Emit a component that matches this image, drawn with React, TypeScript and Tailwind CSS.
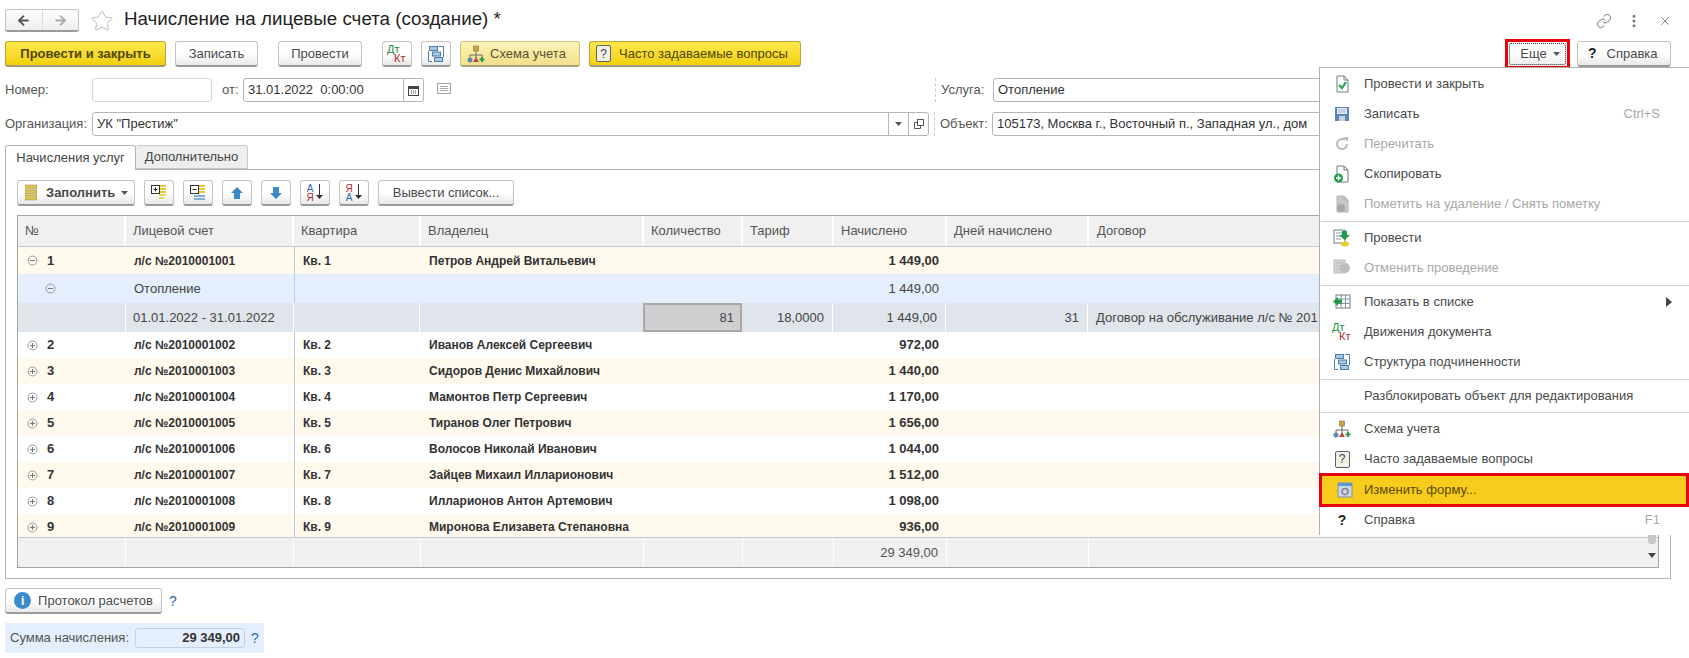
import type { ReactNode } from "react";
import { ArrowLeft, ArrowRight, Star, Link, EllipsisVertical, X } from "lucide-react";

const btn = "h-[26px] flex items-center justify-center shrink-0 rounded-[3px] border border-[#c4c4c4] border-b-[#9a9a9a] border-b-2 bg-gradient-to-b from-white via-white to-[#e9e9e9] text-[#4a4a4a]";
const yellowBtn = "h-[26px] flex items-center justify-center shrink-0 rounded-[3px] border border-[#b9a93a] border-b-[#a09a70] border-b-2 bg-gradient-to-b from-[#ffe94a] to-[#f2d000] text-[#4f4700]";
const input = "h-6 rounded-[3px] border border-[#b5b5b5] bg-white flex items-center px-1 text-[13px] text-[#333]";

const DtKt = () => (
  <svg width="22" height="22" viewBox="0 0 22 22" className="shrink-0">
    <text x="1" y="10" fontSize="11" fontFamily="Liberation Sans" fill="#1d8a3c">Дт</text>
    <text x="8" y="19" fontSize="11" fontFamily="Liberation Sans" fill="#b02a30">Кт</text>
  </svg>
);

const Structure = () => (
  <svg width="18" height="18" viewBox="0 0 18 18" fill="none" className="shrink-0">
    <path d="M1.5 6V16.5H5M12 1.5H16.5V12" stroke="#4f7ea8" />
    <rect x="2.5" y="1.5" width="8" height="4" fill="#a9c8e4" stroke="#4f7ea8" />
    <rect x="5.5" y="7" width="8" height="4" fill="#a9c8e4" stroke="#4f7ea8" />
    <rect x="7.5" y="12.5" width="8" height="4" fill="#a9c8e4" stroke="#4f7ea8" />
  </svg>
);

const Scheme = () => (
  <svg width="18" height="18" viewBox="0 0 18 18" fill="none" className="shrink-0">
    <rect x="6.5" y="1" width="5" height="5" fill="#c9a24a" stroke="#8f7430" strokeWidth=".6" />
    <path d="M9 6V10M3 13V10H15V13M9 10V13" stroke="#6a6a6a" />
    <circle cx="3" cy="15" r="2.5" fill="#5d86b0" />
    <path d="M9 12L12 17H6Z" fill="#b8483e" />
    <path d="M15 12V17M12.5 14.5H17.5" stroke="#2f9a52" strokeWidth="2" />
  </svg>
);

const Help = () => (
  <span className="w-[15px] h-[17px] shrink-0 flex items-center justify-center rounded-[2px] border border-[#5a6070] bg-[#f4f1e0] text-[12px] leading-none text-[#2f3f78]">?</span>
);

const Mark = ({ plus }: { plus: boolean }) => (
  <svg width="11" height="11" viewBox="0 0 11 11" fill="none" className="shrink-0">
    <circle cx="5.5" cy="5.5" r="4.5" stroke="#9a9a9a" />
    <path d={plus ? "M3 5.5H8M5.5 3V8" : "M3 5.5H8"} stroke="#777" />
  </svg>
);

const Doc = ({ children, muted }: { children?: ReactNode; muted?: boolean }) => (
  <svg width="18" height="20" viewBox="0 0 18 20" fill="none" className="shrink-0">
    <path d="M4 2H11L15 6V18H4Z" fill={muted ? "#c8c8c8" : "#fff"} stroke={muted ? "#b5b5b5" : "#6e7a88"} />
    <path d="M11 2V6H15" stroke={muted ? "#b5b5b5" : "#6e7a88"} />
    {children}
  </svg>
);

const FillLines = ({ plus }: { plus: boolean }) => (
  <svg width="18" height="18" viewBox="0 0 18 18" fill="none">
    <path d="M9 2H16M9 5H16M9 8H16" stroke="#ecc92a" strokeWidth="2" />
    <path d={plus ? "M9 11H16M9 14H14" : "M5 12H16M5 15H16"} stroke={plus ? "#ecc92a" : "#5b9ad0"} strokeWidth="1.6" />
    <rect x="1.5" y="1.5" width="8" height="8" fill="#fff" stroke="#333" />
    <path d={plus ? "M3.5 5.5H7.5M5.5 3.5V7.5" : "M3.5 5.5H7.5"} stroke="#222" />
  </svg>
);

const Arrow = ({ down }: { down?: boolean }) => (
  <svg width="14" height="14" viewBox="0 0 14 14">
    <path d={down ? "M4 1H10V7H13L7 13L1 7H4Z" : "M7 1L13 7H10V13H4V7H1Z"} fill="#3a8ac8" />
  </svg>
);

const Sort = ({ top, bottom, topColor, bottomColor }: { top: string; bottom: string; topColor: string; bottomColor: string }) => (
  <div className="flex items-center gap-[1px]">
    <div className="flex flex-col text-[10px] leading-[9px]">
      <span style={{ color: topColor }}>{top}</span>
      <span style={{ color: bottomColor }}>{bottom}</span>
    </div>
    <svg width="9" height="17" viewBox="0 0 9 17"><path d="M4.5 0V12" stroke="#333" /><path d="M1 11H8L4.5 15Z" fill="#333" /></svg>
  </div>
);

const Caret = () => (
  <svg width="7" height="4" viewBox="0 0 7 4" className="shrink-0"><path d="M0 0H7L3.5 4Z" fill="#555" /></svg>
);

type Row = { no: number; acc: string; flat: string; owner: string; sum: string };

const rows: Row[] = [
  { no: 2, acc: "л/с №2010001002", flat: "Кв. 2", owner: "Иванов Алексей Сергеевич", sum: "972,00" },
  { no: 3, acc: "л/с №2010001003", flat: "Кв. 3", owner: "Сидоров Денис Михайлович", sum: "1 440,00" },
  { no: 4, acc: "л/с №2010001004", flat: "Кв. 4", owner: "Мамонтов Петр Сергеевич", sum: "1 170,00" },
  { no: 5, acc: "л/с №2010001005", flat: "Кв. 5", owner: "Тиранов Олег Петрович", sum: "1 656,00" },
  { no: 6, acc: "л/с №2010001006", flat: "Кв. 6", owner: "Волосов Николай Иванович", sum: "1 044,00" },
  { no: 7, acc: "л/с №2010001007", flat: "Кв. 7", owner: "Зайцев Михаил Илларионович", sum: "1 512,00" },
  { no: 8, acc: "л/с №2010001008", flat: "Кв. 8", owner: "Илларионов Антон Артемович", sum: "1 098,00" },
  { no: 9, acc: "л/с №2010001009", flat: "Кв. 9", owner: "Миронова Елизавета Степановна", sum: "936,00" },
];

// column widths taken from the header separators
const c = {
  no: "w-[108px]",
  acc: "w-[168px]",
  flat: "w-[127px]",
  owner: "w-[223px]",
  qty: "w-[99px]",
  rate: "w-[91px]",
  sum: "w-[113px]",
  days: "w-[142px]",
};

const Head = ({ w, children }: { w: string; children: ReactNode }) => (
  <div className={`${w} shrink-0 h-full flex items-center pl-[7px] border-r-2 border-white text-[#555]`}>{children}</div>
);

const DataRow = ({ r }: { r: Row }) => (
  <div className={`h-[26px] flex items-center font-bold text-[12px] text-[#333] ${r.no % 2 ? "bg-[#fff9ee]" : "bg-white"}`}>
    <div className={`${c.no} shrink-0 flex items-center gap-[9px] pl-[9px] text-[13px]`}><Mark plus />{r.no}</div>
    <div className={`${c.acc} shrink-0 px-2`}>{r.acc}</div>
    <div className={`${c.flat} shrink-0 h-full flex items-center px-2 border-l border-[#c8c8c8]`}>{r.flat}</div>
    <div className={`${c.owner} shrink-0 px-2`}>{r.owner}</div>
    <div className={`${c.qty} shrink-0`} />
    <div className={`${c.rate} shrink-0`} />
    <div className={`${c.sum} shrink-0 px-2 text-right text-[13px]`}>{r.sum}</div>
  </div>
);

type Item = { label?: string; icon?: ReactNode; hint?: string; muted?: boolean; arrow?: boolean; active?: boolean; sep?: "h-[3px]" | "h-[4px]" };

const menu: Item[] = [
  { label: "Провести и закрыть", icon: <Doc><path d="M6 11L9 14L13 8" stroke="#2aa14a" strokeWidth="2.2" /></Doc> },
  { label: "Записать", hint: "Ctrl+S", icon: (
    <svg width="16" height="16" viewBox="0 0 16 16" className="shrink-0"><rect x="1" y="1" width="14" height="14" fill="#5a86b5" /><rect x="3" y="2" width="10" height="6" fill="#e6edf5" /><path d="M4 4H12M4 6H12" stroke="#9db6d0" /><rect x="5" y="10" width="6" height="5" fill="#c8d0da" /></svg>
  ) },
  { label: "Перечитать", muted: true, icon: (
    <svg width="16" height="16" viewBox="0 0 16 16" fill="none" className="shrink-0"><path d="M13 8A5 5 0 1 1 11 4" stroke="#b9b9b9" strokeWidth="2" /><path d="M9 1H14V6Z" fill="#b9b9b9" /></svg>
  ) },
  { label: "Скопировать", icon: <Doc><circle cx="5.5" cy="14" r="4.5" fill="#239a4a" /><path d="M3 14H8M5.5 11.5V16.5" stroke="#fff" strokeWidth="1.5" /></Doc> },
  { label: "Пометить на удаление / Снять пометку", muted: true, icon: <Doc muted><circle cx="8" cy="14" r="4" fill="#a8a8a8" /></Doc> },
  { sep: "h-[4px]" },
  { label: "Провести", icon: (
    <svg width="18" height="18" viewBox="0 0 18 18" className="shrink-0"><rect x="1" y="1" width="11" height="13" fill="#fff" stroke="#6e7a88" /><path d="M3 4H10M3 7H10M3 10H8" stroke="#8a95a3" /><path d="M9 2H14V6H17L11.5 11L6 6H9Z" fill="#239a4a" /><ellipse cx="12" cy="15" rx="4" ry="2.5" fill="#ecc92a" /></svg>
  ) },
  { label: "Отменить проведение", muted: true, icon: (
    <svg width="18" height="18" viewBox="0 0 18 18" className="shrink-0"><rect x="1" y="1" width="11" height="13" fill="#d2d2d2" stroke="#c0c0c0" /><path d="M3 4H10M3 7H10M3 10H8" stroke="#bbb" /><circle cx="12" cy="9" r="5" fill="#bdbdbd" /></svg>
  ) },
  { sep: "h-[4px]" },
  { label: "Показать в списке", arrow: true, icon: (
    <svg width="18" height="16" viewBox="0 0 18 16" fill="none" className="shrink-0"><rect x="3" y="1" width="14" height="13" fill="#fff" stroke="#6e7a88" /><path d="M8 1V14M12.5 1V14M3 5H17M3 9.5H17" stroke="#8a95a3" /><path d="M0 7.5L5 3V5.5H9V9.5H5V12Z" fill="#239a4a" /></svg>
  ) },
  { label: "Движения документа", icon: <DtKt /> },
  { label: "Структура подчиненности", icon: <Structure /> },
  { sep: "h-[4px]" },
  { label: "Разблокировать объект для редактирования" },
  { sep: "h-[3px]" },
  { label: "Схема учета", icon: <Scheme /> },
  { label: "Часто задаваемые вопросы", icon: <Help /> },
  { label: "Изменить форму...", active: true, icon: (
    <svg width="16" height="16" viewBox="0 0 16 16" fill="none" className="shrink-0"><rect x="1" y="1" width="14" height="14" fill="#cfd8e2" stroke="#7f93a8" /><rect x="1" y="1" width="14" height="3" fill="#5f9ad2" /><circle cx="8" cy="9.5" r="3" stroke="#7a8796" strokeWidth="1.5" /></svg>
  ) },
  { label: "Справка", hint: "F1", icon: <span className="w-4 text-center text-[14px] font-bold text-[#222]">?</span> },
];

export default function App() {
  return (
    <div className="relative w-[1689px] h-[658px] overflow-hidden bg-white text-[13px] text-[#333] font-['Liberation_Sans',Arial,sans-serif]">
      <div className="flex flex-col pl-[5px] pr-[18px]">
        {/* title */}
        <div className="h-[41px] flex items-center">
          <div className="flex w-[74px] h-[23px] rounded-[3px] border border-[#c4c4c4] border-b-2 border-b-[#9a9a9a] bg-gradient-to-b from-white to-[#eee]">
            <div className="flex-1 flex items-center justify-center border-r border-[#ddd]"><ArrowLeft size={15} strokeWidth={3} color="#555" /></div>
            <div className="flex-1 flex items-center justify-center"><ArrowRight size={15} strokeWidth={3} color="#aaa" /></div>
          </div>
          <Star size={24} strokeWidth={1} color="#b8b8b8" className="ml-[11px]" />
          <span className="ml-[10px] -mt-[2px] text-[18.75px] text-[#222]">Начисление на лицевые счета (создание) *</span>
          <div className="ml-auto flex items-center gap-[14px] -mr-[1px] text-[#777]">
            <Link size={16} strokeWidth={1.5} />
            <EllipsisVertical size={16} strokeWidth={2.5} />
            <X size={14} strokeWidth={1.5} className="ml-[2px]" />
          </div>
        </div>

        {/* command bar */}
        <div className="h-[26px] flex items-center">
          <button className={`${yellowBtn} w-[161px] font-bold`}>Провести и закрыть</button>
          <button className={`${btn} w-[83px] ml-[9px]`}>Записать</button>
          <button className={`${btn} w-[84px] ml-[20px]`}>Провести</button>
          <button className={`${btn} w-[30px] ml-[20px]`}><DtKt /></button>
          <button className={`${btn} w-[30px] ml-[9px]`}><Structure /></button>
          <button className="ml-[9px] w-[120px] h-[26px] shrink-0 flex items-center gap-[5px] pl-[6px] rounded-[3px] border border-[#d0c27a] border-b-2 border-b-[#a8a280] bg-gradient-to-b from-[#fdf3b8] to-[#f2e08a] text-[#5a5330]"><Scheme />Схема учета</button>
          <button className={`${yellowBtn} w-[212px] ml-[9px] !justify-start pl-[6px] gap-[8px]`}><Help />Часто задаваемые вопросы</button>
          <div className="ml-auto flex items-center gap-[7px]">
            <div className="w-[65px] h-[30px] flex items-center justify-center border-[3px] border-[#e8000d]">
              <div className={`${btn} !h-[24px] w-[59px] gap-[6px] pl-[5px] outline-1 -outline-offset-2 outline-dotted outline-[#333] !border-0`}>Еще <Caret /></div>
            </div>
            <button className={`${btn} w-[94px] !justify-start pl-[10px] gap-[10px]`}><span className="font-bold text-[#222] text-[14px]">?</span>Справка</button>
          </div>
        </div>

        {/* header fields */}
        <div className="mt-[11px] h-[24px] flex items-center">
          <span className="w-[87px] text-[#555]">Номер:</span>
          <div className={`${input} w-[120px] border-[#d8d8d8]`} />
          <span className="ml-[10px] w-[21px] text-[#555]">от:</span>
          <div className={`${input} w-[181px] !pr-0`}>
            <span className="flex-1">31.01.2022&nbsp; 0:00:00</span>
            <div className="w-5 h-full flex items-center justify-center border-l border-[#b5b5b5]">
              <svg width="11" height="11" viewBox="0 0 11 11"><rect x=".5" y="1.5" width="10" height="9" fill="#fff" stroke="#444" /><rect x="1" y="1" width="9" height="3" fill="#444" /><path d="M3 6H4M5 6H6M7 6H8M3 8H4M5 8H6M7 8H8" stroke="#444" /></svg>
            </div>
          </div>
          <svg width="14" height="11" viewBox="0 0 14 11" fill="none" className="ml-[13px] -mt-1"><rect x=".5" y=".5" width="13" height="10" stroke="#a5a5a5" /><path d="M3 3.5H11M3 5.5H11M3 7.5H11" stroke="#a5a5a5" /></svg>
          <div className="ml-[484px] h-[24px] border-l border-dashed border-[#ccc]" />
          <span className="ml-[5px] w-[52px] text-[#555]">Услуга:</span>
          <div className={`${input} flex-1`}>Отопление</div>
        </div>
        <div className="mt-[10px] h-[24px] flex items-center">
          <span className="w-[87px] text-[#555]">Организация:</span>
          <div className={`${input} w-[837px] !pr-0`}>
            <span className="flex-1">УК "Престиж"</span>
            <div className="w-5 h-full flex items-center justify-center border-l border-[#b5b5b5]"><Caret /></div>
            <div className="w-5 h-full flex items-center justify-center border-l border-[#b5b5b5]">
              <svg width="10" height="10" viewBox="0 0 10 10" fill="none"><rect x="3.5" y=".5" width="6" height="6" stroke="#555" /><path d="M3 3.5H.5V9.5H6.5V7" stroke="#555" /></svg>
            </div>
          </div>
          <div className="ml-[5px] h-[24px] border-l border-dashed border-[#ccc]" />
          <span className="ml-[5px] w-[52px] text-[#555]">Объект:</span>
          <div className={`${input} flex-1 whitespace-nowrap overflow-hidden`}>105173, Москва г., Восточный п., Западная ул., дом</div>
        </div>

        {/* tabs */}
        <div className="mt-[8px] h-[25px] flex items-end">
          <div className="w-[131px] h-[25px] flex items-center justify-center rounded-t-[3px] border border-b-0 border-[#b5b5b5] bg-white relative z-10 -mb-px pb-px text-[#444]">Начисления услуг</div>
          <div className="w-[112px] h-[24px] flex items-center justify-center rounded-t-[3px] border border-l-0 border-[#c8c8c8] bg-[#eeeeee] text-[#444]">Дополнительно</div>
        </div>
        <div className="h-[410px] border border-[#b5b5b5] px-[11px] pt-[10px]">
          <div className="h-[26px] flex items-center">
            <button className={`${btn} w-[118px] !justify-start pl-[7px] gap-[9px] font-bold`}>
              <svg width="12" height="17" viewBox="0 0 12 17"><path d="M0 1H12V5H0ZM0 6H12V10H0ZM0 11H12V16H0Z" fill="#d9c25a" stroke="#a08a30" strokeWidth=".5" /></svg>
              <span className="flex items-center gap-[6px]">Заполнить <Caret /></span>
            </button>
            <button className={`${btn} w-[30px] ml-[9px]`}><FillLines plus /></button>
            <button className={`${btn} w-[30px] ml-[9px]`}><FillLines plus={false} /></button>
            <button className={`${btn} w-[30px] ml-[9px]`}><Arrow /></button>
            <button className={`${btn} w-[30px] ml-[9px]`}><Arrow down /></button>
            <button className={`${btn} w-[30px] ml-[9px]`}><Sort top="А" bottom="Я" topColor="#2b6aa8" bottomColor="#b02a30" /></button>
            <button className={`${btn} w-[30px] ml-[9px]`}><Sort top="Я" bottom="А" topColor="#b02a30" bottomColor="#2b6aa8" /></button>
            <button className={`${btn} w-[136px] ml-[9px]`}>Вывести список...</button>
          </div>

          {/* table */}
          <div className="mt-[9px] h-[353px] border border-[#a5a5a5] flex flex-col overflow-hidden relative">
            <div className="h-[31px] flex items-center bg-[#f0f0f0] border-b border-[#c8c8c8] shrink-0">
              <Head w={c.no}>№</Head>
              <Head w={c.acc}>Лицевой счет</Head>
              <Head w={c.flat}>Квартира</Head>
              <Head w={c.owner}>Владелец</Head>
              <Head w={c.qty}>Количество</Head>
              <Head w={c.rate}>Тариф</Head>
              <Head w={c.sum}>Начислено</Head>
              <Head w={c.days}>Дней начислено</Head>
              <div className="px-2 text-[#555]">Договор</div>
            </div>
            <div className="flex-1 overflow-hidden">
              <div className="h-[27px] flex items-center font-bold text-[12px] bg-[#fff9ee]">
                <div className={`${c.no} shrink-0 flex items-center gap-[9px] pl-[9px] text-[13px]`}><Mark plus={false} />1</div>
                <div className={`${c.acc} shrink-0 px-2`}>л/с №2010001001</div>
                <div className={`${c.flat} shrink-0 h-full flex items-center px-2 border-l border-[#c8c8c8]`}>Кв. 1</div>
                <div className={`${c.owner} shrink-0 px-2`}>Петров Андрей Витальевич</div>
                <div className={`${c.qty} shrink-0`} />
                <div className={`${c.rate} shrink-0`} />
                <div className={`${c.sum} shrink-0 px-2 text-right text-[13px]`}>1 449,00</div>
              </div>
              <div className="h-[29px] flex items-center bg-[#e4eefc] text-[#444]">
                <div className={`${c.no} shrink-0 pl-[27px]`}><Mark plus={false} /></div>
                <div className={`${c.acc} shrink-0 px-2`}>Отопление</div>
                <div className={`${c.flat} shrink-0 h-full border-l border-[#c0ccd8]`} />
                <div className={`${c.owner} shrink-0`} />
                <div className={`${c.qty} shrink-0`} />
                <div className={`${c.rate} shrink-0`} />
                <div className={`${c.sum} shrink-0 px-2 text-right`}>1 449,00</div>
              </div>
              <div className="h-[29px] flex items-center bg-[#dfe5eb] text-[#444]">
                <div className={`${c.no} shrink-0 h-full border-r border-white`} />
                <div className={`${c.acc} shrink-0 -ml-px px-2`}>01.01.2022 - 31.01.2022</div>
                <div className={`${c.flat} shrink-0 h-full border-x border-white`} />
                <div className={`${c.owner} shrink-0 h-full`} />
                <div className={`${c.qty} shrink-0 h-full flex items-center justify-end px-1.5 bg-[#cfcfd2] border-2 border-[#a8a8a8]`}>81</div>
                <div className={`${c.rate} shrink-0 h-full flex items-center justify-end px-2 border-r border-white`}>18,0000</div>
                <div className={`${c.sum} shrink-0 h-full flex items-center justify-end px-2 border-r border-white`}>1 449,00</div>
                <div className={`${c.days} shrink-0 h-full flex items-center justify-end px-2 border-r border-white`}>31</div>
                <div className="px-2 whitespace-nowrap">Договор на обслуживание л/с № 201</div>
              </div>
              {rows.map((r) => <DataRow key={r.no} r={r} />)}
            </div>
            <div className="h-[30px] flex items-center bg-[#f0f0f0] border-t border-[#c8c8c8] shrink-0 text-[#555]">
              <div className={`${c.no} shrink-0 h-full border-r border-white`} />
              <div className={`${c.acc} shrink-0 h-full border-r border-white`} />
              <div className={`${c.flat} shrink-0 h-full border-r border-white`} />
              <div className={`${c.owner} shrink-0 h-full border-r border-white`} />
              <div className={`${c.qty} shrink-0 h-full border-r border-white`} />
              <div className={`${c.rate} shrink-0 h-full border-r border-white`} />
              <div className={`${c.sum} shrink-0 h-full flex items-center justify-end px-2 border-r border-white`}>29 349,00</div>
              <div className={`${c.days} shrink-0 h-full border-r border-white`} />
            </div>
            <div className="absolute right-[2px] bottom-[23px] w-2 h-5 rounded-b-[3px] bg-[#c8c8c8]" />
            <svg width="8" height="5" viewBox="0 0 8 5" className="absolute right-[2px] bottom-[9px]"><path d="M0 0H8L4 5Z" fill="#444" /></svg>
          </div>
        </div>

        {/* bottom */}
        <div className="mt-[9px] h-[26px] flex items-center">
          <button className={`${btn} w-[157px] gap-[7px]`}>
            <span className="w-[17px] h-[17px] rounded-full bg-[#3c8ccc] text-white text-[12px] font-bold flex items-center justify-center">i</span>
            Протокол расчетов
          </button>
          <span className="ml-[7px] text-[14px] text-[#2b6aa8]">?</span>
        </div>
        <div className="mt-[9px] w-[259px] h-[30px] flex items-center bg-[#e4eefc] pl-[5px]">
          <span className="text-[#555] w-[125px] shrink-0">Сумма начисления:</span>
          <div className="w-[110px] h-[20px] shrink-0 rounded-[3px] border border-[#c4d0de] flex items-center justify-end px-1 font-bold">29 349,00</div>
          <span className="ml-[6px] text-[14px] text-[#2b6aa8]">?</span>
        </div>
      </div>

      {/* "Еще" dropdown */}
      <div className="absolute left-[1319px] top-[67px] w-[370px] h-[468px] bg-white border-l border-t border-[#b0b0b0] flex flex-col pt-px">
        {menu.map((m, i) =>
          m.sep ? (
            <div key={i} className={`${m.sep} shrink-0 flex items-center pl-[1px]`}><div className="w-full h-px bg-[#d0d0d0]" /></div>
          ) : m.active ? (
            <div key={i} className="h-[34px] -ml-px -mt-[1px] -mb-[2px] relative shrink-0 flex items-center border-[3px] border-[#e8000d] bg-[#f8cc1c] text-[#5a4a00]">
              <div className="w-[42px] flex justify-center shrink-0 pl-[3px]">{m.icon}</div>
              <span>{m.label}</span>
            </div>
          ) : (
            <div key={i} className={`h-[30px] shrink-0 flex items-center ${m.muted ? "text-[#a8a8a8]" : "text-[#4a4a4a]"}`}>
              <div className="w-[44px] flex justify-center shrink-0">{m.icon}</div>
              <span>{m.label}</span>
              {m.hint && <span className="ml-auto pr-[29px] text-[#a8a8a8]">{m.hint}</span>}
              {m.arrow && <svg width="6" height="10" viewBox="0 0 6 10" className="ml-auto mr-[17px]"><path d="M0 0L6 5L0 10Z" fill="#444" /></svg>}
            </div>
          )
        )}
      </div>
    </div>
  );
}
